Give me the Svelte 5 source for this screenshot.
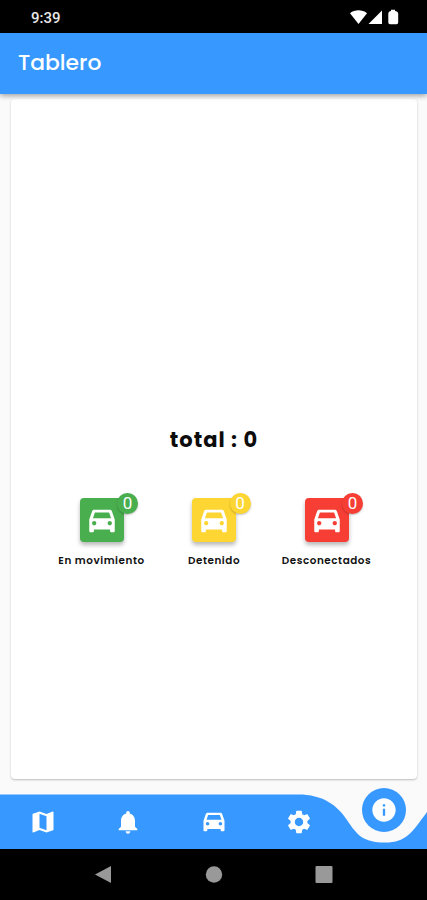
<script>
  let title = 'Tablero';
  let active = 4;

  const car =
    'M18.92 5.01C18.72 4.42 18.16 4 17.5 4h-11c-.66 0-1.21.42-1.42 1.01L3 11v8c0 .55.45 1 1 1h1.300c.55 0 1-.45 1-1v-1h11.400v1c0 .55.45 1 1 1H20c.55 0 1-.45 1-1v-8l-2.08-5.99zM6.500 15c-.83 0-1.500-.67-1.500-1.500S5.670 12 6.500 12s1.500.67 1.500 1.500S7.330 15 6.500 15zm11 0c-.83 0-1.500-.67-1.500-1.500s.67-1.500 1.500-1.500 1.500.67 1.500 1.500-.67 1.500-1.500 1.500zM5.600 10l1.400-4h10l1.400 4H5.600z';

  const statuses = [
    { label: 'En movimiento', count: 0, type: 'moving' },
    { label: 'Detenido', count: 0, type: 'stopped' },
    { label: 'Desconectados', count: 0, type: 'offline' },
  ];

  const tabs = [
    {
      name: 'Mapa',
      path: 'M20.5 3l-.16.03L15 5.1 9 3 3.36 4.9c-.21.07-.36.25-.36.48V20.5c0 .28.22.5.5.5l.16-.03L9 18.9l6 2.1 5.64-1.9c.21-.07.36-.25.36-.48V3.5c0-.28-.22-.5-.5-.5zM15 19l-6-2.11V5l6 2.11V19z',
    },
    {
      name: 'Alertas',
      path: 'M12 22c1.1 0 2-.9 2-2h-4c0 1.1.89 2 2 2zm6-6v-5c0-3.07-1.64-5.64-4.5-6.32V4c0-.83-.67-1.5-1.5-1.5s-1.5.67-1.5 1.5v.68C7.63 5.36 6 7.92 6 11v5l-2 2v1h16v-1l-2-2z',
    },
    { name: 'Vehículos', path: car },
    {
      name: 'Ajustes',
      path: 'M19.14 12.94c.04-.3.06-.61.06-.94 0-.32-.02-.64-.07-.94l2.03-1.58c.18-.14.23-.41.12-.61l-1.92-3.32c-.12-.22-.37-.29-.59-.22l-2.39.96c-.5-.38-1.03-.7-1.62-.94l-.36-2.54c-.04-.24-.24-.41-.48-.41h-3.84c-.24 0-.43.17-.47.41l-.36 2.54c-.59.24-1.13.57-1.62.94l-2.39-.96c-.22-.08-.47 0-.59.22L2.74 8.87c-.12.21-.08.47.12.61l2.03 1.58c-.05.3-.09.63-.09.94s.02.64.07.94l-2.03 1.58c-.18.14-.23.41-.12.61l1.92 3.32c.12.22.37.29.59.22l2.39-.96c.5.38 1.03.7 1.62.94l.36 2.54c.05.24.24.41.48.41h3.84c.24 0 .44-.17.47-.41l.36-2.54c.59-.24 1.13-.56 1.62-.94l2.39.96c.22.08.47 0 .59-.22l1.92-3.32c.12-.22.07-.47-.12-.61l-2.01-1.58zM12 15.6c-1.98 0-3.6-1.62-3.6-3.6s1.62-3.6 3.6-3.6 3.6 1.62 3.6 3.6-1.62 3.6-3.6 3.6z',
    },
    {
      name: 'Información',
      path: 'M12 2C6.48 2 2 6.48 2 12s4.48 10 10 10 10-4.48 10-10S17.52 2 12 2zm1 15h-2v-6h2v6zm0-8h-2V7h2v2z',
    },
  ];

  $: total = statuses.reduce((sum, s) => sum + s.count, 0);
</script>

<div class="screen">
  <div class="status-bar">
    <span>9:39</span>
    <svg width="50" height="17" viewBox="0 0 50 17" fill="#fff">
      <path d="M0 4.2C4.8.4 12.2.4 17 4.2L8.500 15z" />
      <path d="M32 1.500V15H18.500z" />
      <path d="M41 .8h4v1.200q3.200.3 3.200 3v8.500q0 1.700-1.700 1.700h-6.500q-1.700 0-1.700-1.700V5q0-2.700 2.700-3z" />
    </svg>
  </div>

  <header class="app-bar">
    <h1>{title}</h1>
  </header>

  <main class="content">
    <section class="card">
      <h2>total : {total}</h2>
      <div class="statuses">
        {#each statuses as status}
          <div class="status">
            <div class="tile {status.type}">
              <svg width="34" height="34" viewBox="0 0 24 24"><path d={car} /></svg>
              <span class="badge {status.type}">{status.count}</span>
            </div>
            <span class="label">{status.label}</span>
          </div>
        {/each}
      </div>
    </section>
  </main>

  <nav class="tab-bar">
    <svg class="tab-shape" width="427" height="55" viewBox="0 0 427 55">
      <path d="M0 .5H298C323 .5 337 11 347 26C357 41 363 48.500 385 48.500C407 48.500 412 38 427 18V55H0z" />
    </svg>
    {#each tabs as tab, i}
      <button class="tab" class:active={i === active} aria-label={tab.name}>
        <span class="tab-icon">
          <svg width="28" height="28" viewBox="0 0 24 24"><path d={tab.path} /></svg>
        </span>
      </button>
    {/each}
  </nav>

  <div class="system-bar">
    <svg width="18" height="20" viewBox="0 0 18 20"><path d="M16 1v17L0 9.500z" /></svg>
    <svg width="18" height="20" viewBox="0 0 18 20"><circle cx="9" cy="9.500" r="8.200" /></svg>
    <svg width="18" height="20" viewBox="0 0 18 20"><rect x=".5" y="1" width="17" height="17" rx="1" /></svg>
  </div>
</div>

<style>
  :global(body) {
    background: #fafafa;
  }

  .screen {
    display: flex;
    flex-direction: column;
    width: 427px;
    height: 900px;
    overflow: hidden;
    background: #fafafa;
    font-family: Poppins, Inter, 'Open Sans', sans-serif;
    font-feature-settings: 'cv11';
  }

  .status-bar {
    display: flex;
    align-items: center;
    justify-content: space-between;
    box-sizing: border-box;
    height: 33px;
    padding: 2px 27px 0 31px;
    background: #000;
    color: #e8e8e8;
    font-family: Roboto, sans-serif;
    font-size: 15px;
    font-weight: 500;
  }

  .app-bar {
    display: flex;
    align-items: center;
    box-sizing: border-box;
    height: 61px;
    padding: 0 18px 3px;
    background: #3799ff;
    box-shadow: 0 2px 5px rgba(0, 0, 0, 0.35);
    z-index: 1;
  }

  h1 {
    margin: 0;
    color: #fff;
    font-size: 21.8px;
    font-weight: 500;
  }

  .content {
    display: flex;
    flex: 1;
    padding: 5px 10px 15px 11px;
  }

  .card {
    display: flex;
    flex: 1;
    flex-direction: column;
    align-items: center;
    background: #fff;
    border-radius: 4px;
    box-shadow: 0 1px 2px rgba(0, 0, 0, 0.25);
  }

  h2 {
    margin: 327px 0 0;
    color: #0c0c0c;
    font-size: 21px;
    font-weight: 700;
    line-height: 28px;
    letter-spacing: 1px;
  }

  .statuses {
    display: flex;
    margin-top: 44px;
  }

  .status {
    display: flex;
    flex-direction: column;
    align-items: center;
    width: 112.5px;
  }

  .tile {
    position: relative;
    display: flex;
    align-items: center;
    justify-content: center;
    width: 44px;
    height: 44px;
    border-radius: 4px;
    box-shadow: 0 3px 4px rgba(0, 0, 0, 0.28);
  }

  .tile svg,
  .tab-icon svg {
    display: block;
    fill: #fff;
  }

  .tile svg {
    margin-top: 2px;
  }

  .moving {
    background: #49ae4e;
  }

  .stopped {
    background: #fdd633;
  }

  .offline {
    background: #f63e35;
  }

  .badge {
    position: absolute;
    top: -5.5px;
    right: -14.5px;
    width: 21px;
    height: 21px;
    border-radius: 50%;
    box-shadow: 0 1px 2px rgba(0, 0, 0, 0.25);
    color: #fff;
    font-family: Roboto, sans-serif;
    font-size: 17px;
    line-height: 21px;
    text-align: center;
  }

  .label {
    margin-top: 11px;
    color: #111;
    font-size: 10.4px;
    font-weight: 600;
    line-height: 16px;
    letter-spacing: 0.55px;
    white-space: nowrap;
  }

  .tab-bar {
    position: relative;
    display: flex;
    height: 55px;
  }

  .tab-shape {
    position: absolute;
    inset: 0;
    fill: #3799ff;
  }

  .tab {
    position: relative;
    display: flex;
    flex: 1;
    align-items: center;
    justify-content: center;
    padding: 0;
    border: 0;
    background: none;
  }

  .active .tab-icon {
    display: flex;
    align-items: center;
    justify-content: center;
    width: 44px;
    height: 44px;
    margin: 0 0 24px;
    border-radius: 50%;
    background: #3799ff;
  }

  .system-bar {
    display: flex;
    align-items: center;
    justify-content: center;
    gap: 92px;
    height: 51px;
    background: #000;
    fill: #999;
  }
</style>
